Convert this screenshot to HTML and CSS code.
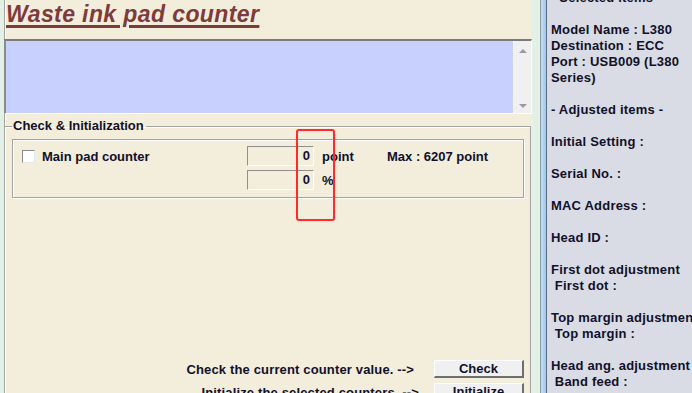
FILE: index.html
```html
<!DOCTYPE html>
<html lang="en">
<head>
  <meta charset="UTF-8">
  <title>Waste ink pad counter</title>
  <link rel="stylesheet" href="styles.css">
</head>
<body>
  <div class="app">
    <div class="left">
      <div class="panel">
        <h1 class="title">Waste ink pad counter</h1>

        <!-- message list -->
        <div class="listbox">
          <div class="list-area"></div>
          <div class="vscroll">
            <span class="arrow up"></span>
            <span class="arrow down"></span>
          </div>
        </div>

        <fieldset class="group">
          <legend>Check &amp; Initialization</legend>
          <div class="counter-frame">
            <div class="counter-row">
              <span class="checkbox"></span>
              <span class="counter-name">Main pad counter</span>
              <span class="field">0</span>
              <span class="unit">point</span>
              <span class="max">Max : 6207 point</span>
            </div>
            <div class="counter-row">
              <span class="checkbox blank"></span>
              <span class="counter-name"></span>
              <span class="field">0</span>
              <span class="unit">%</span>
            </div>
          </div>

          <div class="action-row">
            <span class="action-label">Check the current counter value. --&gt;</span>
            <button class="button">Check</button>
          </div>
          <div class="action-row">
            <span class="action-label second">Initialize the selected counters. --&gt;</span>
            <button class="button">Initialize</button>
          </div>
        </fieldset>
      </div>
    </div>

    <div class="win-edge"></div>

    <div class="sidebar">
      <div class="info">
        <div>- Selected items -</div>
        <div>&nbsp;</div>
        <div>Model Name : L380</div>
        <div>Destination : ECC</div>
        <div>Port : USB009 (L380</div>
        <div>Series)</div>
        <div>&nbsp;</div>
        <div>- Adjusted items -</div>
        <div>&nbsp;</div>
        <div>Initial Setting :</div>
        <div>&nbsp;</div>
        <div>Serial No. :</div>
        <div>&nbsp;</div>
        <div>MAC Address :</div>
        <div>&nbsp;</div>
        <div>Head ID :</div>
        <div>&nbsp;</div>
        <div>First dot adjustment</div>
        <div>&nbsp;First dot :</div>
        <div>&nbsp;</div>
        <div>Top margin adjustment</div>
        <div>&nbsp;Top margin :</div>
        <div>&nbsp;</div>
        <div>Head ang. adjustment</div>
        <div>&nbsp;Band feed :</div>
      </div>
    </div>

    <!-- red marker drawn over the counter values -->
    <div class="highlight"></div>
  </div>
</body>
</html>
```

FILE: styles.css
```css
body {
  margin: 0;
  overflow: hidden;
  font-family: "Liberation Sans", Arial, sans-serif;
  font-size: 13px;
  font-weight: bold;
  color: #10102a;
}
.app {
  position: relative;
  display: flex;
  width: 692px;
  height: 393px;
  overflow: hidden;
}
.left {
  width: 540px;
  background-color: #e3f0e5;
  padding-left: 4px;
  box-sizing: border-box;
}
.panel {
  width: 527px;
  height: 100%;
  background-color: #f3eddb;
  border-left: 1px solid #a3a3a3;
  box-shadow: inset 1px 0 0 #fff;
}
.title {
  margin: 0 0 11px 0;
  padding: 1px 0 0 1px;
  height: 27px;
  line-height: 27px;
  font-size: 23px;
  font-style: italic;
  letter-spacing: 0.4px;
  color: #7e3b3b;
  text-decoration: underline;
  text-decoration-thickness: 3px;
  text-underline-offset: 3px;
}
.listbox {
  display: flex;
  height: 72px;
  margin-left: -1px;
  border-top: 2px solid #7a7a7a;
  border-left: 2px solid #8a8a8a;
  border-right: 1px solid #fff;
  border-bottom: 1px solid #fff;
}
.list-area {
  flex: 1;
  background-color: #c8d0fd;
}
.vscroll {
  width: 17px;
  background-color: #f0f0f0;
  border-left: 1px dotted #fff;
  display: flex;
  flex-direction: column;
  justify-content: space-between;
  align-items: center;
  padding: 8px 0 5px;
}
.arrow {
  width: 0;
  height: 0;
  border-left: 4px solid transparent;
  border-right: 4px solid transparent;
}
.arrow.up { border-bottom: 4px solid #9a9aa4; }
.arrow.down { border-top: 4px solid #9a9aa4; }

/* Check & Initialization group */
.group {
  margin: 5px 1px 0 -1px;
  padding: 0 6px 0 7px;
  border: 1px solid #a3a3a3;
  box-shadow: inset 1px 1px 0 #fff;
  min-width: 0;
}
.group legend {
  padding: 0 2px 0 1px;
  line-height: 14px;
}
.counter-frame {
  margin-top: 6px;
  height: 51px;
  border: 1px solid #a3a3a3;
  box-shadow: inset 1px 1px 0 #fff, 1px 1px 0 #fff;
  padding: 6px 0 0 9px;
  margin-bottom: 162px;
}
.counter-row {
  display: flex;
  align-items: center;
  height: 20px;
  margin-bottom: 4px;
}
.checkbox {
  width: 11px;
  height: 11px;
  background-color: #fff;
  border-top: 1px solid #8a8a8a;
  border-left: 1px solid #8a8a8a;
  border-right: 1px solid #e8e8e8;
  border-bottom: 1px solid #e8e8e8;
  margin-right: 7px;
}
.checkbox.blank {
  visibility: hidden;
}
.counter-name {
  width: 205px;
}
.field {
  width: 62px;
  height: 18px;
  line-height: 18px;
  text-align: right;
  padding-right: 3px;
  border-top: 1px solid #8f8f8f;
  border-left: 1px solid #8f8f8f;
  border-right: 1px solid #fff;
  border-bottom: 1px solid #fff;
}
.unit {
  width: 65px;
  padding-left: 8px;
}
.action-row {
  display: flex;
  justify-content: flex-end;
  align-items: center;
  margin-bottom: 5px;
}
.action-label {
  margin-right: 20px;
  letter-spacing: 0.15px;
}
.action-label.second {
  margin-right: 15px;
}
.button {
  width: 90px;
  height: 18px;
  padding: 0;
  font-family: inherit;
  font-size: 13px;
  font-weight: bold;
  color: #10102a;
  background-color: #f0f0f0;
  border-top: 1px solid #fff;
  border-left: 1px solid #fff;
  border-right: 2px solid #6e6e6e;
  border-bottom: 2px solid #6e6e6e;
}

/* window edge between the two panes */
.win-edge {
  width: 7px;
  box-sizing: border-box;
  border-left: 1px solid #8d9aa8;
  border-right: 1px solid #5d6e82;
  background: linear-gradient(to right, #c4dff4, #9ec8ea);
}
.sidebar {
  flex: 1;
  background-color: #dadce5;
  overflow: hidden;
}
.info {
  margin-top: -10px;
  padding-left: 4px;
  line-height: 16px;
  letter-spacing: 0.2px;
  white-space: nowrap;
}

.highlight {
  position: absolute;
  left: 296px;
  top: 129px;
  width: 39px;
  height: 92px;
  box-sizing: border-box;
  border: 2px solid #ff2b2b;
  border-radius: 3px;
}
```
